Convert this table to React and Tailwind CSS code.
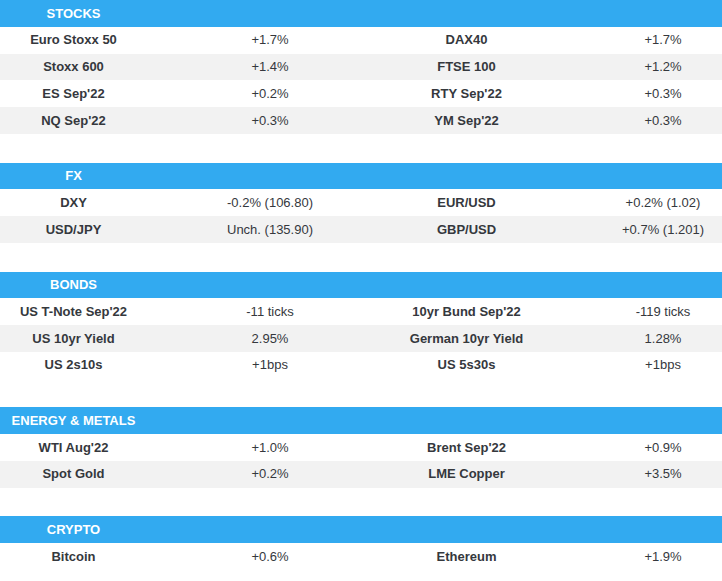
const sections = [
  {
    title: "STOCKS",
    rows: [
      ["Euro Stoxx 50", "+1.7%", "DAX40", "+1.7%"],
      ["Stoxx 600", "+1.4%", "FTSE 100", "+1.2%"],
      ["ES Sep'22", "+0.2%", "RTY Sep'22", "+0.3%"],
      ["NQ Sep'22", "+0.3%", "YM Sep'22", "+0.3%"],
    ],
  },
  {
    title: "FX",
    rows: [
      ["DXY", "-0.2% (106.80)", "EUR/USD", "+0.2% (1.02)"],
      ["USD/JPY", "Unch. (135.90)", "GBP/USD", "+0.7% (1.201)"],
    ],
  },
  {
    title: "BONDS",
    rows: [
      ["US T-Note Sep'22", "-11 ticks", "10yr Bund Sep'22", "-119 ticks"],
      ["US 10yr Yield", "2.95%", "German 10yr Yield", "1.28%"],
      ["US 2s10s", "+1bps", "US 5s30s", "+1bps"],
    ],
  },
  {
    title: "ENERGY & METALS",
    rows: [
      ["WTI Aug'22", "+1.0%", "Brent Sep'22", "+0.9%"],
      ["Spot Gold", "+0.2%", "LME Copper", "+3.5%"],
    ],
  },
  {
    title: "CRYPTO",
    rows: [["Bitcoin", "+0.6%", "Ethereum", "+1.9%"]],
  },
];

function Row({ cells, shaded }) {
  return (
    <div
      className={`grid grid-cols-[147px_246px_147px_246px] h-[26.75px] items-center text-center ${
        shaded ? "bg-[#f2f2f2]" : "bg-white"
      }`}
    >
      <div className="font-bold">{cells[0]}</div>
      <div>{cells[1]}</div>
      <div className="font-bold">{cells[2]}</div>
      <div>{cells[3]}</div>
    </div>
  );
}

function Section({ title, rows }) {
  return (
    <div className="flex flex-col">
      <div className="grid grid-cols-[147px_1fr] h-[26.75px] items-center bg-[#32aaf0] text-white font-bold text-center">
        <div className="whitespace-nowrap">{title}</div>
      </div>
      {rows.map((r, i) => (
        <Row key={i} cells={r} shaded={i % 2 === 1} />
      ))}
    </div>
  );
}

export default function App() {
  return (
    <div
      className="w-[722px] h-[581px] overflow-hidden bg-white text-[13px] text-[#35383d]"
      style={{ fontFamily: '"Liberation Sans", Arial, sans-serif' }}
    >
      <div className="w-[786px] flex flex-col gap-[28.75px]">
        {sections.map((s) => (
          <Section key={s.title} title={s.title} rows={s.rows} />
        ))}
      </div>
    </div>
  );
}
